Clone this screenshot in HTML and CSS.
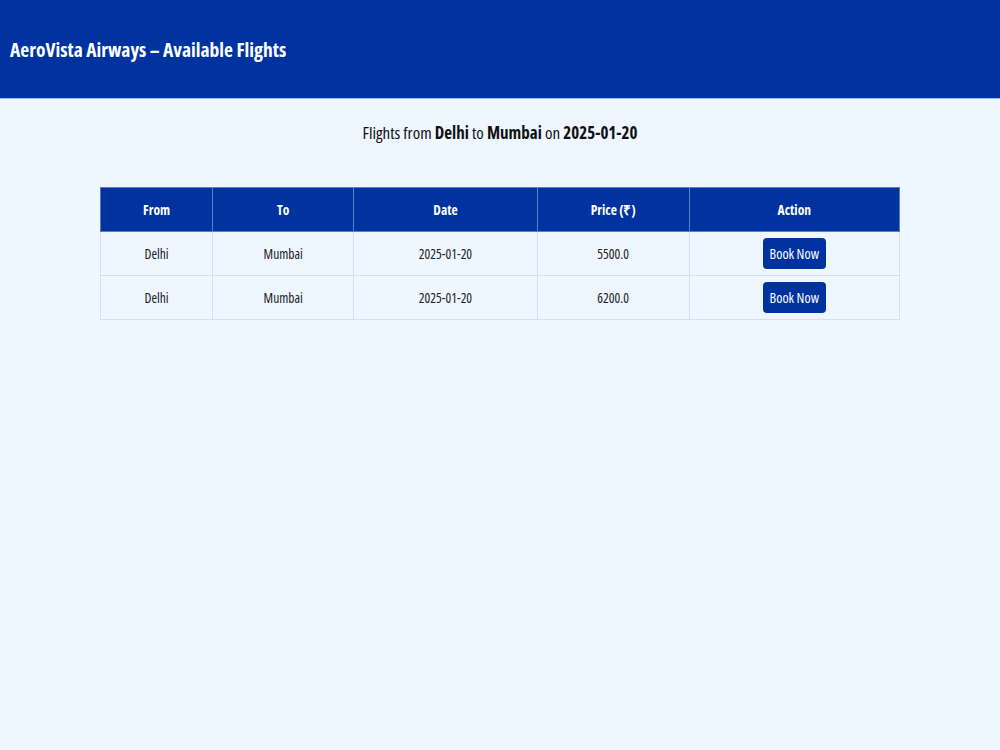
FILE: index.html
```html
<!DOCTYPE html>
<html lang="en">
<head>
	<meta charset="UTF-8">
	<meta name="viewport" content="width=device-width, initial-scale=1.0">
	<title>AeroVista Airways – Available Flights</title>
	<link rel="stylesheet" href="styles.css">
</head>
<body>

<header class="topbar">
	<h1>AeroVista Airways – Available Flights</h1>
</header>

<main class="content">
	<h2 class="summary">Flights from <b>Delhi</b> to <b>Mumbai</b> on <b>2025-01-20</b></h2>

	<table class="flights">
		<tr>
			<th class="col-from">From</th>
			<th class="col-to">To</th>
			<th class="col-date">Date</th>
			<th class="col-price">Price (₹)</th>
			<th class="col-action">Action</th>
		</tr>
		<tr>
			<td>Delhi</td>
			<td>Mumbai</td>
			<td>2025-01-20</td>
			<td>5500.0</td>
			<td><button class="book">Book Now</button></td>
		</tr>
		<tr>
			<td>Delhi</td>
			<td>Mumbai</td>
			<td>2025-01-20</td>
			<td>6200.0</td>
			<td><button class="book">Book Now</button></td>
		</tr>
	</table>
</main>

</body>
</html>
```

FILE: styles.css
```css
body {
	font-family: 'Open Sans', 'Liberation Sans', Arial, sans-serif;
	font-stretch: 75%;
	background: #eef6ff;
	color: #111;
	margin: 0;
}

.topbar {
	background: #0033a0;
	color: white;
	height: 98px;
	padding: 0 10px;
	display: flex;
	align-items: center;
	border-bottom: 1px solid #9bbcf0;
}

.topbar h1 {
	margin: 0 0 -1px;
	font-size: 19.5px;
	font-weight: bold;
}

.content {
	padding-top: 22px;
}

.summary {
	text-align: center;
	font-size: 17px;
	font-weight: normal;
	margin: 0 0 43px;
}

.flights {
	width: 800px;
	margin: 0 auto;
	border-collapse: collapse;
	font-size: 13.5px;
	color: #222;
}

.flights th,
.flights td {
	border: 1px solid #d6dff0;
	text-align: center;
	height: 43px;
	padding: 0;
}

.flights th {
	background: #0033a0;
	color: white;
	font-weight: bold;
	border-color: #5a7ccc;
}

.col-from { width: 112px; }
.col-to { width: 141px; }
.col-date { width: 184px; }
.col-price { width: 152px; }
.col-action { width: 211px; }

.book {
	background: #0033a0;
	color: white;
	border: none;
	border-radius: 4px;
	font-family: inherit;
	font-stretch: inherit;
	font-size: 14px;
	padding: 6px 7px;
}
```
